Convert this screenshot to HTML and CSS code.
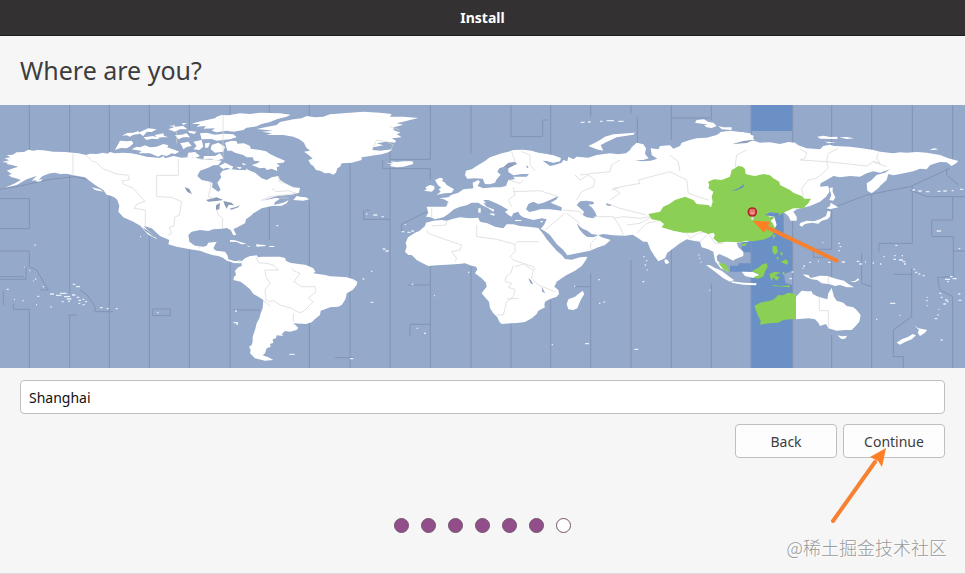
FILE: index.html
```html
<!DOCTYPE html>
<html lang="en">
<head>
    <meta charset="UTF-8">
    <meta name="viewport" content="width=device-width, initial-scale=1.0">
    <title>Install</title>
    <link rel="stylesheet" href="styles.css">
</head>
<body>
    <header class="titlebar">Install</header>
    <main class="page">
        <h1>Where are you?</h1>

        <svg class="map" viewBox="0 15 2895 789" role="img" aria-label="Time zone map">
            <rect class="sea" y="15" width="2895" height="789"/>

            <!-- selected zone -->
            <g class="band" transform="translate(2220 0)">
                <path d="M32 15H158V93H32Z"/>
                <path d="M70 335H130V415H158V512L132 522L136 548L158 556V804H32V515H-30V497H-5V490H32V457H5V420L70 405Z"/>
            </g>

            <!-- zone lines -->
            <path class="zone" d="M88 15V150M88 628V804M209 15V160M209 225V580M209 645V804M328 15V156M328 285V804M448 15V100M448 400V804M568 15V90M568 448V804M690 15V45M690 485V804M808 15V40M808 320V420M928 15V50M928 300V804M1050 190V804M1170 155V804M1291 15V178H1170M1148 180V206H1291V240M1291 498V804M1413 15V160M1413 500V804M1533 15V110M1533 110H1628V60H1645M1533 672V804M1652 15V165M1652 600V804M1772 15V50M1772 520V804M1912 50V130M1893 15V40M1893 480V804M2014 15V120M2014 54H2130M2014 430V804M2134 15V60M2134 550V804M2254 15V804M2378 15V130M2378 340V804M2495 15V140M2495 330V448H2440V472H2495V540M2495 705V804M2615 15V150M2615 285V804M2737 15V155M2737 260V430H2637V455M2735 505V650L2680 690V770H2710V804M2858 15V180M2858 290V360H2795V410H2860V530L2812 532L2820 570L2858 590V804"/>
            <path class="zone" d="M0 268L60 258L150 238L225 230L270 240M0 296H88V386H0M0 453H88V500L110 510L145 570H120M0 538H78V500M0 530H70M10 572V615M40 612V628H88M205 645H230M240 570L262 585L285 620V635H340M458 627H511V647H458ZM1091 330V358H1170M1095 330H1110M1205 395V372L1280 335M1225 555H1290M1230 673H1290M1230 675V710M700 630H780M1005 773H1060M1720 560H1770M2480 330L2600 285L2730 260L2850 205M2730 270L2780 290H2895M2585 460V550L2615 560M2680 523H2735M2350 345V415H2378M2858 453H2895M2840 205V225L2875 255"/>

            <!-- North America -->
            <g class="land">
                <path d="M6 186L28 181L13 175L32 172L20 166L38 164L50 157L72 156L85 149L100 152L112 150L130 151L160 155L195 156L235 160L258 165L270 161L290 162L310 158L322 161L330 156L345 160L370 158L392 160L410 163L440 170L480 174L490 168L496 175L520 168L545 173L570 171L600 176L640 180L665 182L655 195L640 196L625 203L600 212L592 228L605 240L630 245L638 250L636 262L654 275L662 270L652 248L664 232L660 222L668 212L690 207L715 210L745 210L765 218L785 235L800 240L815 232L835 228L840 240L860 252L880 262L900 264L897 278L875 284L830 288L800 298L785 302L830 293L840 296L825 306L822 315L850 308L866 300L860 310L845 317L815 318L785 325L760 340L752 348L738 358L735 370L712 382L700 388L709 404L700 406L692 390L680 384L665 386L640 388L625 393L600 390L575 395L565 405L568 425L585 437L610 440L620 437L625 428L650 425L640 445L648 452L675 455L682 465L685 478L705 484L725 480L710 488L680 482L670 474L655 468L640 466L620 460L600 452L570 448L530 440L505 433L508 420L480 408L455 385L432 378L440 388L465 410L472 418L445 404L430 388L422 378L400 365L370 352L355 335L358 318L352 300L342 290L320 284L310 270L290 258L265 240L255 232L220 226L200 221L180 222L165 218L150 220L128 228L115 240L95 242L110 228L80 238L50 255L15 263L45 250L62 240L48 235L35 232L25 225L36 222L20 212L40 205L55 200L38 196L20 192L24 188Z"/>
                <path d="M330 280L368 297L360 300L335 288ZM275 262L300 268L310 275L285 270ZM108 240L128 238L122 244L110 245ZM890 288L900 290L918 292L927 298L910 302L880 300Z"/>
            </g>
            <g class="land" transform="translate(300 0)">
                <path d="M45 150L60 122L82 124L95 122L100 130L92 138L80 145L62 144Z"/>
                <path d="M95 148L110 140L120 142L135 136L150 142L170 140L190 132L205 136L202 142L225 150L238 155L225 162L215 160L200 168L185 164L175 170L150 160L115 160L125 153Z"/>
                <path d="M66 107L82 99L100 98L115 93L118 102L100 104L90 110L80 106ZM115 98L145 85L170 88L155 96L140 96L130 108ZM165 105L190 100L192 107L205 112L185 112L170 115ZM130 112L160 108L180 118L155 116L140 120ZM205 88L225 80L250 78L262 88L240 88L225 95ZM225 105L245 104L260 100L270 112L250 112L235 118ZM205 78L225 76L225 80ZM245 70L262 69L250 75Z"/>
                <path d="M275 72L290 67L310 62L345 55L350 50L365 45L385 46L420 40L450 42L480 38L540 40L572 44L560 50L530 58L510 66L485 72L470 79L440 83L430 90L400 95L380 92L350 97L335 92L345 85L310 86L318 78L290 80L300 72Z"/>
                <path d="M300 100L320 98L345 104L370 101L400 103L410 112L390 118L350 122L335 117L305 118ZM264 92L290 95L282 102L268 98ZM240 130L265 125L275 138L262 140L250 148L246 138ZM280 125L305 120L310 140L298 150L280 148L290 138ZM335 135L355 128L375 140L370 155L345 158L332 148ZM315 130L330 128L325 142L316 145ZM265 158L285 156L300 168L285 174L262 170ZM345 168L360 160L370 175L350 182L330 176L310 178L312 168Z"/>
                <path d="M375 128L395 122L410 124L412 131L432 130L450 138L452 146L480 150L498 154L510 162L530 172L555 182L550 188L530 190L540 198L530 202L532 213L515 206L500 210L495 203L480 205L455 195L472 190L480 184L462 182L458 172L440 172L430 165L405 158L395 152L382 152ZM357 198L375 188L400 200L395 208L380 203L370 207ZM408 200L425 202L420 208ZM440 205L448 215L438 212ZM425 190L440 192L430 196Z"/>
            </g>
            <g class="lake" transform="translate(300 0)">
                <path d="M318 300L350 292L370 300L350 303L325 305ZM348 316L360 308L358 328L348 330ZM370 303L395 308L402 316L386 314L380 326L374 315ZM388 326L410 320L420 316L415 322L395 329ZM254 262L262 264L268 267L276 282L262 276ZM128 382L140 390L168 412L160 410L136 392Z"/>
            </g>
            <path class="border" d="M219 160V226M258 165L275 182L290 188L310 207L350 222L385 226L388 240L367 242L370 252L400 265L435 305L420 308L408 315L403 325L436 330V378M535 178V226H470V290L515 292L545 305L538 345L524 352L522 378L508 382L515 400L505 405M630 245L632 262L625 290L640 295M650 330L655 345L668 355L667 386M815 265L830 275L865 272L890 280M600 178H640M530 90V130M669 45V180M590 435L600 445M835 228L838 245L860 252"/>

            <!-- Greenland, Iceland and South America -->
            <g transform="translate(690 0)">
                <path class="land" d="M80 87L105 82L140 75L150 66L190 58L215 55L230 48L255 52L280 50L300 43L340 40L400 35L450 38L485 42L480 50L520 50L565 54L540 60L520 65L500 70L520 74L492 82L490 90L512 98L500 102L515 112L485 115L498 122L495 128L470 125L440 130L460 136L430 142L428 150L450 152L488 148L475 157L455 163L420 168L395 172L395 180L365 188L335 190L330 200L322 205L318 218L310 224L298 219L285 220L270 212L258 210L250 198L242 193L235 180L248 176L236 165L222 155L240 152L228 142L222 128L208 118L190 110L160 105L110 105L125 100L95 95L130 92Z"/>
                <path class="land" d="M468 188L490 190L480 184L500 186L520 184L548 184L550 192L520 200L500 202L478 198L485 193Z"/>
                <path class="land" d="M0 420L15 421L50 432L35 433L20 426L0 425ZM78 433L105 435L108 438L80 440ZM50 436L62 440L55 440ZM118 438H133V441H118Z"/>
                <path class="land" d="M-5 482L20 485L35 484L45 475L60 468L80 466L85 472L95 470L120 470L150 470L165 474L168 482L180 488L205 492L225 494L235 498L250 505L256 515L250 520L285 525L300 529L330 530L350 532L370 538L382 545L380 555L368 570L350 580L348 592L345 600L335 615L325 620L300 622L285 628L272 632L270 645L255 657L245 667L228 672L215 671L190 670L205 683L200 690L180 695L165 693L155 703L160 708L140 706L138 715L128 718L130 728L120 732L122 740L110 745L105 760L98 766L115 772L130 780L105 782L75 775L60 760L62 750L57 740L65 735L68 725L68 710L75 690L80 670L88 655L92 640L98 625L100 600L85 590L70 582L60 568L45 555L32 545L10 540L12 530L18 525L15 512L25 502L35 498L35 490L10 489Z"/>
                <path class="border" d="M78 470L85 488L108 490L130 495L145 510L105 510L108 530L120 550L105 570L108 600L118 605L130 602L150 615L185 625L200 635L212 638L225 630L235 620L250 605L235 595L258 575L255 560L215 560L192 545L210 520L190 512L185 505M190 640V665M100 602L112 612L120 618M425 150L440 120L470 125L490 135L480 150M480 80L510 90"/>
                <path class="border" d="M92 302L120 290L160 285L200 280M150 294H176"/>
            </g>

            <!-- Africa -->
            <g transform="translate(1140 0)">
                <path class="land" d="M160 362L185 360L200 362L220 356L240 352L270 355L295 353L300 365L322 370L345 380L370 385L380 373L400 373L420 378L445 380L475 384L488 400L500 418L515 435L530 452L545 465L555 477L575 479L600 472L622 470L618 480L605 498L585 512L560 525L545 535L530 545L523 560L535 570L537 582L530 590L510 597L495 605L493 615L495 622L475 632L470 642L455 655L435 666L410 669L390 670L365 672L358 665L352 652L340 640L330 625L327 605L315 592L305 580L312 570L320 560L318 548L305 535L285 520L292 508L288 500L275 497L255 490L235 492L200 494L170 496L145 498L125 488L110 480L95 465L85 465L75 455L80 440L77 428L84 412L105 398L118 393L135 378L138 368Z"/>
                <path class="land" d="M565 628L560 612L565 598L585 590L600 578L608 572L613 582L602 600L592 625L580 630Z"/>
                <path class="border" d="M155 378L198 375L200 362M140 390L145 400L200 420L245 435L240 450L215 455L230 475L225 485M290 375V410L350 418L405 433V455L390 470L400 480L460 500L465 510M475 425H412L405 433M400 495L392 520L378 530L375 545L395 550L385 562L405 568L400 590L380 605L370 645L350 645M405 500L430 492L460 510L455 535L475 555L525 575M380 597L415 595"/>
                <path class="lake" d="M445 535L452 540L460 553L452 550ZM485 560L493 575L496 580L487 575Z"/>
            </g>

            <!-- Europe and Asia -->
            <g transform="translate(1140 0)">
                <path class="land" d="M165 240L180 233L190 236L186 243L194 247L200 255L212 262L222 268L215 278L195 280L170 284L182 275L176 268L184 263L174 256ZM132 272L140 268L136 262L150 255L163 258L163 268L155 275Z"/>
                <path class="land" d="M138 350L145 338L140 320L170 320L198 320L205 305L192 298L178 295L205 292L215 284L235 278L250 268L280 265L278 248L295 240L300 245L293 258L310 265L340 262L362 262L378 258L385 240L405 238L400 230L440 230L447 222L425 222L400 226L385 216L385 200L395 195L412 192L405 185L385 188L372 200L358 205L352 215L362 224L350 238L345 248L330 253L315 252L308 236L285 235L262 236L255 225L258 212L275 208L295 195L315 183L330 172L350 165L365 160L385 155L400 150L430 149L455 152L475 158L500 162L520 166L543 174L540 184L520 188L500 183L488 182L510 198L525 195L545 188L550 180L562 184L565 170L580 178L590 170L625 173L650 165L690 160L715 163L738 160L750 150L755 142L770 128L790 133L798 145L795 162L806 175L790 180L765 180L785 184L812 182L832 176L815 165L812 145L835 148L840 138L870 136L880 146L900 138L905 128L930 120L950 115L980 113L1010 105L1020 98L1060 95L1090 97L1110 103L1122 108L1115 120L1140 128L1170 127L1200 132L1225 126L1245 128L1255 136L1280 145L1320 148L1330 138L1350 134L1362 138L1410 140L1445 145L1480 150L1500 155L1540 160L1560 157L1580 158L1610 156L1640 158L1680 165L1705 175L1735 183L1728 190L1715 198L1700 187L1680 186L1660 192L1650 196L1640 208L1620 206L1600 214L1560 222L1540 226L1525 222L1520 240L1500 258L1495 265L1475 280L1462 272L1460 250L1475 240L1490 225L1515 218L1530 208L1500 218L1480 214L1460 220L1440 230L1410 228L1380 232L1360 228L1340 240L1322 250L1320 260L1345 258L1348 275L1338 290L1320 305L1290 318L1250 328L1240 335L1250 350L1250 362L1232 362L1225 348L1210 335L1180 340L1190 375L1175 400L1150 415L1100 425L1070 428L1075 442L1090 455L1090 468L1065 478L1060 482L1040 472L1018 462L1010 468L1012 482L1030 498L1045 515L1022 505L1005 482L1000 455L985 448L965 442L960 425L940 422L920 418L900 430L880 445L862 458L855 475L835 484L825 470L812 450L802 425L790 425L775 415L758 404L735 407L700 406L670 402L655 405L635 402L622 392L605 385L590 370L598 388L608 400L620 410L640 412L655 405L665 412L692 420L675 435L655 442L630 452L600 458L562 466L550 450L530 432L510 405L495 394L482 386L492 375L500 358L485 355L460 360L430 352L420 345L415 335L400 340L395 350L385 345L375 335L385 330L365 318L345 308L325 300L310 300L320 312L345 325L340 335L325 325L305 315L295 308L275 308L260 316L240 320L222 328L205 342L190 352L165 358L152 352Z"/>
                <path class="sea" d="M438 328L445 312L460 305L475 312L490 308L510 300L535 288L530 298L512 308L545 322L545 332L510 328L480 328L465 332L448 336ZM590 315L600 304L620 302L640 305L642 312L625 314L635 322L645 335L650 348L640 355L620 352L608 345L612 335ZM310 308L328 312L345 325L368 332L384 346L365 342L340 328L320 320Z"/>
                <path class="land" d="M405 360H424V363H405ZM335 340L345 342L342 347L328 342ZM295 325H302V338H295ZM480 364L490 362L485 368Z"/>
                <path class="lake" d="M678 310L695 314L690 318L680 316ZM440 195L446 203H440ZM385 190L410 192L385 205L372 200Z"/>
                <path class="border" d="M395 155L405 185M425 155L450 165L450 195L465 212M400 262L405 285L385 300L395 320M400 275L480 272L535 290M385 240L420 250L430 240M585 225L600 240L625 225L645 240L640 260L605 275L590 300M720 180L695 195L690 215L640 220L600 225M550 330L600 335L605 345M555 340L495 390M560 340L600 370M640 350L700 350L720 380L730 405M695 270L715 265M680 310L720 325L760 335L800 345M690 300L720 280L700 265L780 250L775 240L870 215L920 240L925 280L985 300M700 355L730 350L780 355L810 350M740 375L780 370L815 350M770 400L800 370L845 360M900 215L895 185L870 165M1100 150L1070 165L1065 200L1075 210M1260 148L1280 158L1275 175L1260 180L1340 185L1345 160L1375 145M1340 185L1460 198L1480 185L1500 190L1490 175L1495 158M1340 185L1345 205L1310 235L1285 240L1265 265L1270 290M1480 185L1520 200M920 398L930 415L955 400L975 395M960 425L985 400L1005 430L1030 430M632 452V430L650 412M200 320L205 305M155 350V325M1060 132L1120 120"/>
            </g>

            <g transform="translate(1740 0)">
                <path class="land" d="M25 138L45 128L60 120L75 110L100 103L165 98L160 104L110 112L75 128L62 136L70 152L50 148ZM345 68L350 60L372 58L385 66L400 68L410 78L395 84L380 82L372 76L385 74ZM415 78L430 82L455 82L455 90L425 88ZM420 96L450 92L510 100L523 120L470 120L430 110Z"/>
                <path class="land" d="M253 480L260 478L268 487L262 492L255 490ZM378 495L390 496L405 504L425 512L448 530L462 540L450 545L430 535L405 515ZM455 544L490 548L530 550L528 556L490 554L455 548ZM485 515L520 516L540 525L520 534L495 528Z"/>
                <path class="green" d="M205 342L240 335L250 320L268 312L285 300L315 290L340 300L350 312L385 315L393 322L398 305L395 290L400 275L385 265L388 255L384 245L402 238L425 240L450 230L455 210L465 205L475 198L488 200L495 208L497 222L512 226L525 228L550 222L570 226L580 235L598 245L600 255L630 270L640 278L665 288L673 296L693 296L685 310L670 325L640 325L610 338L598 346L590 340L570 336L560 342L568 350L585 352L572 362L578 370L585 385L582 395L575 408L555 418L520 424L500 422L480 427L440 425L415 428L400 415L405 405L400 398L385 402L360 393L340 398L310 398L280 392L245 382L252 372L240 362L215 358Z"/>
                <path class="band" d="M453 273L475 265L492 252L490 262L470 271ZM555 345L570 336L600 340L580 350Z"/>
                <path class="green" d="M415 490L430 490L442 498L448 515L432 510ZM485 432L502 430L495 438L485 438ZM515 514L535 503L548 492L560 490L563 500L556 512L550 530L532 536L520 532L540 524ZM578 404L587 405L580 418Z"/>
                <path class="lake" d="M458 132L490 123L523 119L500 129Z"/>
            </g>

            <!-- Oceania and Japan -->
            <g transform="translate(2220 0)">
                <path class="land" d="M178 375L182 368L200 362L222 364L240 358L258 348L263 332L272 335L270 350L262 358L245 362L235 371L215 368L195 372L185 380ZM260 325L270 318L272 308L295 322L282 325L270 328ZM268 265L278 262L278 275L286 292L280 302L268 300L274 285ZM232 110L250 107L270 111L292 110L292 117L240 116ZM298 112L320 111L342 115L320 117ZM255 125L288 127L265 130ZM568 148L585 145L595 148L580 150Z"/>
                <path class="land" d="M188 523L205 525L212 534L240 527L262 528L290 537L312 542L325 552L342 562L320 562L300 555L285 558L270 553L245 550L232 540L215 538L198 531ZM330 543L345 543L355 534L357 540L345 547ZM168 590L185 572L200 574L215 574L218 582L235 590L262 598L265 580L275 564L282 590L290 602L310 608L320 618L340 622L350 630L362 645L358 665L345 680L335 690L315 690L290 692L265 685L258 672L240 678L235 668L225 658L205 655L168 658ZM292 706L306 709L322 707L315 716L304 717ZM470 728L485 718L505 710L518 702L528 706L515 718L495 726L480 734ZM522 676L535 685L562 690L553 700L540 708L533 698L537 690Z"/>
                <path class="green" d="M43 618L60 608L90 602L102 598L115 585L130 586L145 578L168 582V656L130 660L115 668L88 670L60 674L62 662L53 645ZM98 438L110 438L114 455L105 465L97 455ZM120 455L130 460L124 468ZM108 472L116 472L114 482ZM122 485L138 478L145 485L142 494L130 490ZM88 522L105 515L122 518L104 526L118 532L110 542L100 532L94 543ZM128 515H133V524H128ZM97 555L125 558L150 556L148 562L130 560L100 558Z"/>
                <path class="border" d="M238 590V632H265V685M265 528V552"/>
            </g>

            <!-- small islands -->
            <path class="islets" d="M72 502h2M88 512h3M105 537h4M100 543h2M128 560h4M103 435h4M20 568h6M42 598h3M67 602h4M112 589h6M108 614h3M151 621h4M150 582h12M168 586h16M180 580h20M192 590h18M200 597h14M185 605h6M204 604h6M218 553h8M228 560h12M216 585h10M230 592h8M235 601h8M248 598h5M255 605h6M235 610h6M248 614h6M300 623h8M320 626h6M347 626h6M472 638h4M420 410h3M705 633h6M700 668h14M708 672h6M829 377h6M868 763h16M1050 776h10M1098 342h4M1120 345h12M1145 350h6M1148 447h8M1156 453h10M1113 514h4M1088 537h5M1112 607h8M1235 553h5M1302 587h3M1250 685h4M1272 700h6M1205 395h8M1222 397h10M1234 393h8M1214 374h4M1404 517h4M1655 734h4M1755 731h12M1722 559h4M1795 539h5M1797 610h4M1811 606h4M1903 748h12M1930 470h4M1938 482h4M1934 495h4M1940 510h3M1927 545h6M2095 465h3M2098 475h3M2102 487h3M2128 571h3"/>
            <path class="islets" d="M1742 67h12M1764 66h8M1800 64h8M1820 62h22M1855 64h16M2467 428h3M2515 430h5M2519 440h5M2515 452h5M2428 487h5M2454 484h3M2484 487h8M2525 486h10M2410 498h5M2408 505h3M2368 536h8M2375 516h5M2570 484h8M2578 492h8M2595 486h3M2618 489h4M2640 492h4M2650 470h4M2686 436h6M2682 467h5M2697 480h12M2680 478h8M2712 492h6M2705 467h4M2708 485h8M2740 508h5M2745 517h7M2755 522h6M2768 527h6M2737 270h8M2755 273h10M2778 275h10M2812 274h10M2830 273h10M2855 272h6M2880 268h10M2810 393h13M2876 446h5M2835 538h15M2858 536h12M2850 530h8M2842 545h5M2780 592h3M2778 602h5M2818 580h6M2822 592h6M2835 600h8M2840 605h6M2830 612h8M2815 628h3M2780 617h3M2804 656h8M2812 645h4M2875 582h6M2876 601h8M2822 720h6M2628 658h4M2698 646h3M2670 610h16"/>

            <!-- location pin -->
            <g transform="translate(2220 0)">
                <path class="pin-stem" d="M37 348V360"/>
                <circle class="pin" cx="37" cy="336" r="12"/>
                <path class="pin-mark" d="M31 332H34M40 332H43M31 339H43"/>
                <path class="shaft" d="M290 482L75 379"/>
                <path class="head" d="M38 362L91 365L72 398Z"/>
            </g>
        </svg>

        <form class="location">
            <input type="text" class="city" aria-label="Location" value="Shanghai">
            <div class="actions">
                <button type="button">Back</button>
                <button type="submit">Continue</button>
                <svg class="arrow" viewBox="0 0 58 76" width="58" height="76" aria-hidden="true">
                    <path class="shaft" d="M4 73L46 14"/>
                    <path class="head" d="M57 0L41 9L49 13L53 19Z"/>
                </svg>
            </div>
        </form>

        <div class="steps" role="img" aria-label="Step 6 of 7">
            <span class="done"></span>
            <span class="done"></span>
            <span class="done"></span>
            <span class="done"></span>
            <span class="done"></span>
            <span class="done"></span>
            <span></span>
        </div>
        <div class="watermark" lang="zh">@稀土掘金技术社区</div>
    </main>
</body>
</html>
```
FILE: styles.css
```css
* {
    box-sizing: border-box;
}
body {
    margin: 0;
    min-height: 100vh;
    display: flex;
    flex-direction: column;
    background-color: #f6f6f6;
    color: #3d3d3d;
    font-family: "Noto Sans", "Open Sans", sans-serif;
    font-size: 14px;
}
.titlebar {
    height: 36px;
    line-height: 36px;
    background-color: #333132;
    border-bottom: 1px solid #1f1d1e;
    color: #fff;
    font-weight: bold;
    text-align: center;
}
.page {
    position: relative;
    flex: 1;
    border-bottom: 1px solid #d9d9d9;
}
h1 {
    margin: 0;
    padding: 16px 20px 17px;
    font-size: 25px;
    line-height: 36px;
    font-weight: normal;
}

/* map */
.map {
    display: block;
    width: 100%;
}
.sea {
    fill: #95a9ca;
}
.band {
    fill: #6b90c6;
}
.land {
    fill: #fff;
}
.green {
    fill: #8bcf54;
}
.lake {
    fill: #8d9db8;
}
.zone {
    fill: none;
    stroke: #8093b5;
    stroke-width: 3;
}
.border {
    fill: none;
    stroke: #d3d3d3;
    stroke-width: 2;
}
.islets {
    fill: none;
    stroke: #e6eefa;
    stroke-width: 4;
}
.pin {
    fill: #e8695f;
    stroke: #a8262c;
    stroke-width: 5;
}
.pin-stem {
    stroke: #e4e4e4;
    stroke-width: 6;
}
.pin-mark {
    stroke: #f7c4bd;
    stroke-width: 3;
}
.shaft {
    fill: none;
    stroke: #f58233;
    stroke-width: 4;
    stroke-linecap: round;
}
.map .shaft {
    stroke-width: 12;
}
.head {
    fill: #ff7f27;
}

/* form */
.location {
    padding: 12px 20px 0;
}
.city {
    display: block;
    width: 100%;
    height: 34px;
    padding: 0 8px;
    border: 1px solid #c0bfbd;
    border-radius: 4px;
    background-color: #fff;
    color: #111;
    font: inherit;
}
.actions {
    position: relative;
    display: flex;
    justify-content: flex-end;
    gap: 6px;
    margin-top: 10px;
}
button {
    width: 102px;
    height: 34px;
    padding: 0;
    border: 1px solid #c0bfbd;
    border-radius: 4px;
    background-color: #fdfdfd;
    color: inherit;
    font: inherit;
    cursor: pointer;
}
.arrow {
    position: absolute;
    top: 24px;
    right: 58px;
    pointer-events: none;
}

/* progress */
.steps {
    display: flex;
    justify-content: center;
    gap: 12px;
    margin-top: 60px;
}
.steps span {
    width: 15px;
    height: 15px;
    border: 1px solid #75546d;
    border-radius: 50%;
    background-color: #fff;
}
.steps .done {
    background-color: #924d8b;
}
.watermark {
    position: absolute;
    right: 18px;
    bottom: 12px;
    color: #999;
    font-family: "Noto Sans CJK SC", sans-serif;
    font-size: 18px;
    font-weight: 300;
    line-height: 28px;
    text-shadow: 1px 1px 1px #fff;
}
```
